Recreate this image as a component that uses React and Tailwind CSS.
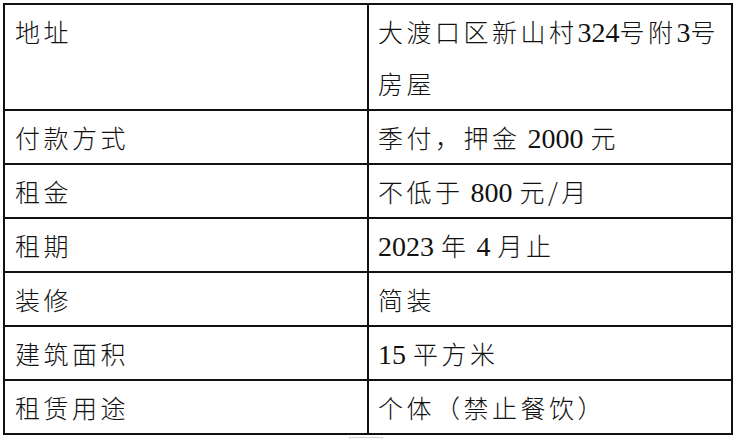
import React from "react";

const D = ({ children }) => (
  <span className="text-[28px] leading-none tracking-[0px]" style={{ fontFamily: '"Liberation Serif", "Times New Roman", serif' }}>{children}</span>
);

const rows = [
  ["地址", <>大渡口区新山村<D>324</D>号附<D>3</D>号<br />房屋</>],
  ["付款方式", <>季付，押金<D> 2000 </D>元</>],
  ["租金", <>不低于<D> 800 </D>元/月</>],
  ["租期", <><D>2023 </D>年<D> 4 </D>月止</>],
  ["装修", <>简装</>],
  ["建筑面积", <><D>15 </D>平方米</>],
  ["租赁用途", <>个体（禁止餐饮）</>],
];

export default function App() {
  return (
    <div className="relative w-[734px] h-[439px] bg-white overflow-hidden">
      <div
        className="absolute left-[3px] top-[3px] w-[730px] grid grid-cols-2 border-t-2 border-l-2 border-[#111] text-[25px] font-light tracking-[3.5px] text-[#111] leading-[52px]"
        style={{ fontFamily: '"Noto Sans CJK SC", serif' }}
      >
        {rows.map(([k, v], i) => (
          <React.Fragment key={i}>
            <div className={`border-r-2 border-b-2 border-[#111] pl-[10px] whitespace-pre overflow-hidden ${i === 0 ? "h-[106px]" : "h-[54px]"}`}>{k}</div>
            <div className={`border-r-2 border-b-2 border-[#111] pl-[9px] whitespace-pre overflow-hidden ${i === 0 ? "h-[106px]" : "h-[54px]"}`}>{v}</div>
          </React.Fragment>
        ))}
      </div>
      <div className="absolute left-[349px] top-[437px] w-[34px] h-[6px] border-t border-l border-r border-gray-300"></div>
    </div>
  );
}
